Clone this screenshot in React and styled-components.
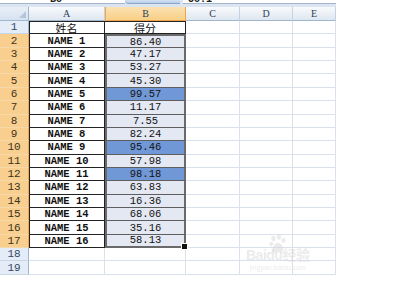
import React from 'react';
import styled, { createGlobalStyle, css } from 'styled-components';

const GlobalStyle = createGlobalStyle`
  html, body { margin: 0; padding: 0; background: #fff; }
  body { width: 393px; height: 290px; overflow: hidden; }
`;

const scores = [
  '86.40', '47.17', '53.27', '45.30', '99.57', '11.17', '7.55', '82.24',
  '95.46', '57.98', '98.18', '63.83', '16.36', '68.06', '35.16', '58.13',
];
const marked = [4, 8, 10];

const Page = styled.div`
  position: relative;
  width: 393px;
  height: 290px;
  background: #fff;
`;

const FormulaBar = styled.div`
  display: flex;
  width: 336px;
  height: 7px;
  background: #dbe5f1;
  overflow: hidden;
`;

const NameBox = styled.div`
  box-sizing: border-box;
  width: 125px;
  height: 4px;
  background: #fff;
  border-bottom: 1px solid #a3b4cc;
  overflow: hidden;
  font: bold 10px "Liberation Mono", monospace;
  color: #222;
  padding-left: 50px;
  line-height: 0;
`;

const Dropdown = styled.div`
  width: 55px;
  height: 4px;
  background: linear-gradient(#d4e2f4, #b8cde9);
  border-bottom-left-radius: 8px;
  border-bottom: 1px solid #8ea7c8;
  box-sizing: border-box;
`;

const FormulaInput = styled.div`
  box-sizing: border-box;
  flex: 1;
  margin-left: 3px;
  height: 4px;
  background: #fff;
  border-bottom: 1px solid #a3b4cc;
  overflow: hidden;
  font: bold 10px "Liberation Mono", monospace;
  color: #222;
  padding-left: 5px;
  line-height: 0;
`;

const Sheet = styled.div`
  display: grid;
  grid-template-columns: 29px 76px 81px 54px 53px 43px;
  grid-template-rows: 14px repeat(19, 13.37px);
  width: 336px;
`;

const Corner = styled.div`
  position: relative;
  box-sizing: border-box;
  background: linear-gradient(#e9eff8, #d6e1f0);
  border-right: 1px solid #9eb6ce;
  border-bottom: 1px solid #9eb6ce;

  &::after {
    content: '';
    position: absolute;
    right: 2px;
    bottom: 2px;
    border-left: 7px solid transparent;
    border-bottom: 7px solid #b4c4da;
  }
`;

const ColHead = styled.div`
  box-sizing: border-box;
  display: flex;
  align-items: center;
  justify-content: center;
  font: 10px "Liberation Serif", serif;
  color: #2b3d5a;
  border-right: 1px solid #c5d2e3;
  border-bottom: 1px solid #9eb6ce;
  background: ${p => (p.$active
    ? 'linear-gradient(#fbe2b2, #f8cf86)'
    : 'linear-gradient(#f8fafd, #dfe6ef)')};
  ${p => p.$active && css`
    border-right-color: #f1a44a;
    border-bottom-color: #f1a44a;
    border-left: 1px solid #f1a44a;
  `}
`;

const RowHead = styled.div`
  box-sizing: border-box;
  display: flex;
  align-items: center;
  justify-content: center;
  font: 11px "Liberation Mono", monospace;
  color: ${p => (p.$active ? '#3a3320' : '#344865')};
  background: ${p => (p.$active ? '#f9cf8f' : '#e4ecf7')};
  border-right: 1px solid ${p => (p.$active ? '#f1a44a' : '#9eb6ce')};
  border-bottom: 1px solid ${p => (p.$active ? '#f7d8a8' : '#c9d6e6')};
`;

const Cell = styled.div`
  position: relative;
  box-sizing: border-box;
  display: flex;
  align-items: center;
  justify-content: center;
  font: 10.5px "Liberation Mono", "Noto Sans CJK SC", monospace;
  font-weight: ${p => (p.$bold ? 'bold' : 'normal')};
  color: #111;
  background: ${p => (p.$mark ? '#7198d6' : p.$sel ? '#e4e8f3' : '#fff')};
  border-right: 1px solid ${p => (p.$table ? '#222' : '#dbe1ec')};
  border-bottom: 1px solid ${p => (p.$table ? '#222' : '#dbe1ec')};
  ${p => p.$first && css`box-shadow: inset 1px 0 0 #222;`}
  ${p => p.$topRow && css`border-top: 1px solid #222;`}
  ${p => p.$sel && css`
    border-left: 2px solid #6a6a6a;
    border-right: 2px solid #6a6a6a;
    border-bottom-color: #5e5e5e;
  `}
  ${p => p.$selTop && css`border-top: 2px solid #6a6a6a;`}
  ${p => p.$selEnd && css`border-bottom: 2px solid #6a6a6a;`}
`;

const Title = styled.span`
  font: 11px "Noto Sans CJK SC", sans-serif;
  color: #111;
`;

const FillHandle = styled.span`
  position: absolute;
  right: -4px;
  bottom: -4px;
  width: 5px;
  height: 5px;
  background: #111;
  border: 1px solid #fff;
  z-index: 2;
`;

const Watermark = styled.div`
  position: absolute;
  left: 246px;
  top: 234px;
  display: flex;
  flex-direction: column;
  align-items: center;
  color: rgba(210, 210, 210, 0.45);
  pointer-events: none;
`;

const MarkRow = styled.div`
  display: flex;
  align-items: flex-end;
  font: bold 14px "Liberation Sans", "Noto Sans CJK SC", sans-serif;
  letter-spacing: -0.5px;
  line-height: 14px;
  margin-top: -6px;
`;

const MarkUrl = styled.div`
  font: 7px "Liberation Sans", sans-serif;
  margin-top: 2px;
`;

const Paw = () => (
  <svg width="20" height="20" viewBox="0 0 20 22" fill="rgba(215,215,215,0.5)">
    <ellipse cx="5" cy="5" rx="2.3" ry="3" />
    <ellipse cx="11" cy="3.2" rx="2.3" ry="3" />
    <ellipse cx="16" cy="7" rx="2.2" ry="2.8" />
    <ellipse cx="2.5" cy="11" rx="2" ry="2.6" />
    <path d="M10 10c3 0 6 4 6 7s-2 4-6 3c-4 1-7 0-6-3 0-3 3-7 6-7z" />
  </svg>
);

const columns = ['A', 'B', 'C', 'D', 'E'];

export default function App() {
  const rows = [];
  for (let r = 1; r <= 19; r++) {
    const active = r >= 2 && r <= 17;
    const idx = r - 2;
    rows.push(<RowHead key={`h${r}`} $active={active}>{r}</RowHead>);

    if (r === 1) {
      rows.push(<Cell key="a1" $table $first $topRow><Title>姓名</Title></Cell>);
      rows.push(<Cell key="b1" $table $topRow><Title>得分</Title></Cell>);
    } else if (active) {
      rows.push(<Cell key={`a${r}`} $table $first $bold>NAME {idx + 1}</Cell>);
      rows.push(
        <Cell
          key={`b${r}`}
          $table
          $sel
          $mark={marked.includes(idx)}
          $selTop={r === 2}
          $selEnd={r === 17}
        >
          {scores[idx]}
          {r === 17 && <FillHandle />}
        </Cell>
      );
    } else {
      rows.push(<Cell key={`a${r}`} />);
      rows.push(<Cell key={`b${r}`} />);
    }
    rows.push(<Cell key={`c${r}`} />);
    rows.push(<Cell key={`d${r}`} />);
    rows.push(<Cell key={`e${r}`} />);
  }

  return (
    <Page>
      <GlobalStyle />
      <FormulaBar>
        <NameBox>B8</NameBox>
        <Dropdown />
        <FormulaInput>58.1</FormulaInput>
      </FormulaBar>
      <Sheet>
        <Corner />
        {columns.map(c => (
          <ColHead key={c} $active={c === 'B'}>{c}</ColHead>
        ))}
        {rows}
      </Sheet>
      <Watermark>
        <Paw />
        <MarkRow>Bai<span>du</span>经验</MarkRow>
        <MarkUrl>jingyan.baidu.com</MarkUrl>
      </Watermark>
    </Page>
  );
}
